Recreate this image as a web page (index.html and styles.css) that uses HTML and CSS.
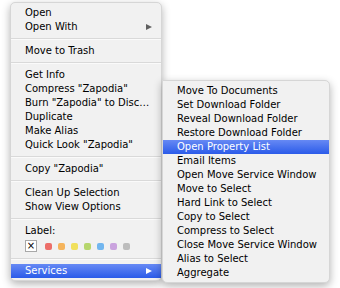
FILE: index.html
```html
<!DOCTYPE html>
<html lang="en">
<head>
  <meta charset="UTF-8">
  <title>Context Menu</title>
  <link rel="stylesheet" href="styles.css">
</head>
<body>

<div class="desk">
  <div class="menu main-menu">
    <div class="item">Open</div>
    <div class="item">Open With <span class="arrow"></span></div>
    <div class="sep"></div>
    <div class="item">Move to Trash</div>
    <div class="sep"></div>
    <div class="item">Get Info</div>
    <div class="item">Compress "Zapodia"</div>
    <div class="item">Burn "Zapodia" to Disc…</div>
    <div class="item">Duplicate</div>
    <div class="item">Make Alias</div>
    <div class="item">Quick Look "Zapodia"</div>
    <div class="sep"></div>
    <div class="item">Copy "Zapodia"</div>
    <div class="sep"></div>
    <div class="item">Clean Up Selection</div>
    <div class="item">Show View Options</div>
    <div class="sep"></div>
    <div class="item">Label:</div>
    <div class="labels">
      <span class="no-label">×</span>
      <span class="dot red"></span>
      <span class="dot orange"></span>
      <span class="dot yellow"></span>
      <span class="dot green"></span>
      <span class="dot blue"></span>
      <span class="dot purple"></span>
      <span class="dot gray"></span>
    </div>
    <div class="sep"></div>
    <div class="item active">Services <span class="arrow"></span></div>
  </div>

  <div class="menu sub-menu">
    <div class="item">Move To Documents</div>
    <div class="item">Set Download Folder</div>
    <div class="item">Reveal Download Folder</div>
    <div class="item">Restore Download Folder</div>
    <div class="item active">Open Property List</div>
    <div class="item">Email Items</div>
    <div class="item">Open Move Service Window</div>
    <div class="item">Move to Select</div>
    <div class="item">Hard Link to Select</div>
    <div class="item">Copy to Select</div>
    <div class="item">Compress to Select</div>
    <div class="item">Close Move Service Window</div>
    <div class="item">Alias to Select</div>
    <div class="item">Aggregate</div>
  </div>
</div>

</body>
</html>
```

FILE: styles.css
```css
body {
  margin: 0;
  background: #fff;
  font-family: 'DejaVu Sans', sans-serif;
  font-size: 10px;
  color: #000;
}

.desk {
  position: relative;
  width: 340px;
  height: 288px;
}

.menu {
  background: #f1f1f1;
  border: 1px solid #d6d6d6;
  border-radius: 5px;
  box-shadow: 0 3px 8px rgba(0, 0, 0, 0.3);
  box-sizing: border-box;
}

.main-menu {
  margin-left: 10px;
  padding-top: 3px;
  width: 152px;
  height: 279px;
  display: flex;
  flex-direction: column;
  position: relative;
  top: 2px;
}

.sub-menu {
  position: absolute;
  left: 162px;
  top: 80px;
  width: 168px;
  height: 203px;
  padding-top: 3px;
  border-top-left-radius: 0;
}

.item {
  height: 14px;
  line-height: 14px;
  padding-left: 14px;
  position: relative;
  white-space: nowrap;
}

.item.active {
  background: linear-gradient(#6689f4, #2b5be9);
  color: #fff;
}

.arrow {
  position: absolute;
  right: 9px;
  top: 4px;
  border-left: 6px solid #606060;
  border-top: 3px solid transparent;
  border-bottom: 3px solid transparent;
}

.active .arrow {
  border-left-color: #fff;
}

.sep {
  height: 1px;
  margin: 4px 0 4px;
  background: #d9d9d9;
  border-bottom: 1px solid #fafafa;
}

.labels {
  display: flex;
  align-items: center;
  gap: 6px;
  height: 16px;
  padding-left: 14px;
}

.no-label {
  width: 10px;
  height: 10px;
  border: 1px solid #a8a8a8;
  background: #fff;
  font-size: 10px;
  line-height: 9px;
  text-align: center;
  margin-right: 2px;
}

.dot {
  width: 7px;
  height: 7px;
  border-radius: 2px;
}

.red { background: #ec6e69; }
.orange { background: #f5b45c; }
.yellow { background: #f1e05c; }
.green { background: #b6d66d; }
.blue { background: #72b6ef; }
.purple { background: #caa3de; }
.gray { background: #bdbdbd; }
```
